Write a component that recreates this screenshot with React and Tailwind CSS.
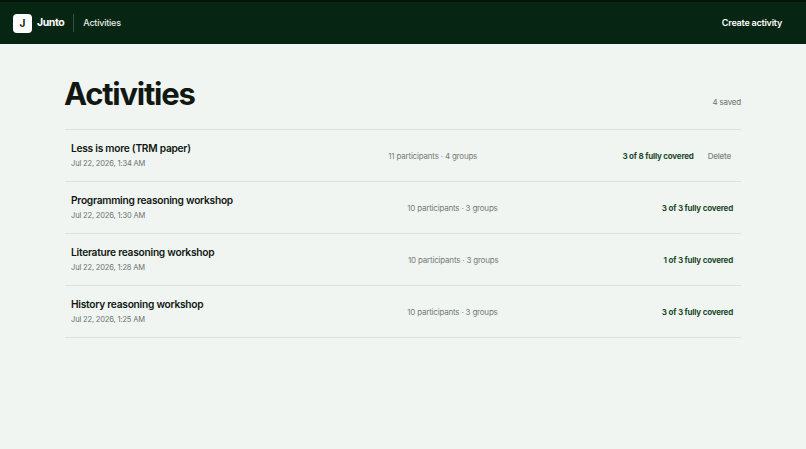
import React from "react";

const activities = [
  {
    title: "Less is more (TRM paper)",
    date: "Jul 22, 2026, 1:34 AM",
    meta: "11 participants · 4 groups",
    coverage: "3 of 8 fully covered",
    deletable: true,
  },
  {
    title: "Programming reasoning workshop",
    date: "Jul 22, 2026, 1:30 AM",
    meta: "10 participants · 3 groups",
    coverage: "3 of 3 fully covered",
  },
  {
    title: "Literature reasoning workshop",
    date: "Jul 22, 2026, 1:28 AM",
    meta: "10 participants · 3 groups",
    coverage: "1 of 3 fully covered",
  },
  {
    title: "History reasoning workshop",
    date: "Jul 22, 2026, 1:25 AM",
    meta: "10 participants · 3 groups",
    coverage: "3 of 3 fully covered",
  },
];

const App = () => {
  return (
    <div className="min-h-[449px] bg-[#f1f5f2] font-['Inter','Liberation_Sans',sans-serif] text-[#111813]">
      {/* Top bar */}
      <header className="h-[44px] bg-[#062512] border-t-2 border-[#02130a] flex items-center justify-between pl-[13px] pr-3">
        <div className="flex items-center">
          <div className="w-[19px] h-[19px] rounded-[4px] bg-white flex items-center justify-center text-[10px] font-bold text-[#0b1a10]">
            J
          </div>
          <span className="ml-[5px] text-[10.5px] font-bold text-white tracking-[-0.04em]">Junto</span>
          <div className="ml-[9px] w-px h-[18px] bg-white/20" />
          <span className="ml-[9px] text-[9px] font-medium text-white/90 tracking-tight">Activities</span>
        </div>
        <button className="px-3 text-[9px] font-semibold text-white tracking-tight">Create activity</button>
      </header>

      {/* Content */}
      <main className="max-w-[676px] mx-auto pt-[34px]">
        <div className="flex items-end justify-between pb-[20px]">
          <h1 className="-ml-[1px] text-[31px] leading-none font-bold tracking-[-0.04em]">Activities</h1>
          <span className="text-[8px] text-[#6b716d] mb-[1px] tracking-tight">4 saved</span>
        </div>

        <ul className="border-t border-[#dde2de]">
          {activities.map((a) => (
            <li
              key={a.title}
              className="flex items-center h-[52px] pl-1.5 pr-2 border-b border-[#dde2de]"
            >
              <div className="w-[172px] shrink-0">
                <div className="text-[10.2px] font-semibold leading-[15px] tracking-tight whitespace-nowrap">
                  {a.title}
                </div>
                <div className="text-[7.5px] leading-[12px] mt-[2px] text-[#6b716d] tracking-[-0.02em]">{a.date}</div>
              </div>
              <div className="flex-1 text-center text-[8px] text-[#767c78] tracking-tight">{a.meta}</div>
              <div className="flex items-center gap-[14px] shrink-0">
                <span className="text-[8px] font-bold text-[#1d4a2c] tracking-tight">{a.coverage}</span>
                {a.deletable && (
                  <button className="pr-[2px] text-[8px] font-medium text-[#7b817d] tracking-tight">Delete</button>
                )}
              </div>
            </li>
          ))}
        </ul>
      </main>
    </div>
  );
};

export default App;
